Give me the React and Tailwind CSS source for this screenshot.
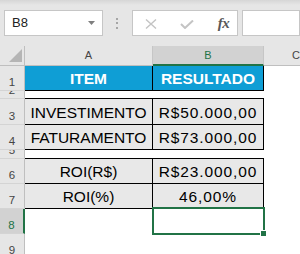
import React from 'react';

const GREEN = '#217346';

// row list: height in px (incl. bottom border), contents and style kind
const rows = [
  { n: 1, h: 'h-[25px]', a: 'ITEM', b: 'RESULTADO', kind: 'head' },
  { n: 2, h: 'h-[8px]', kind: 'blank' },
  { n: 3, h: 'h-[26px]', a: 'INVESTIMENTO', b: 'R$50.000,00', kind: 'data' },
  { n: 4, h: 'h-[25px]', a: 'FATURAMENTO', b: 'R$73.000,00', kind: 'data' },
  { n: 5, h: 'h-[9px]', kind: 'blank' },
  { n: 6, h: 'h-[25px]', a: 'ROI(R$)', b: 'R$23.000,00', kind: 'data' },
  { n: 7, h: 'h-[25px]', a: 'ROI(%)', b: '46,00%', kind: 'data' },
  { n: 8, h: 'h-[25px]', kind: 'empty', selected: true },
  { n: 9, h: 'h-[25px]', kind: 'empty' },
];

const RowHeader = ({ n, selected }) => (
  <div
    className={`w-[25px] shrink-0 flex items-end justify-center overflow-hidden pb-[1px] text-[11.5px] leading-[14px] ${
      selected
        ? 'bg-[#d2d2d2] text-[#217346] border-r-2 border-r-[#217346] border-b border-b-[#d4d4d4]'
        : 'bg-[#e6e6e6] text-[#444] border-r border-r-[#bfbfbf] border-b border-b-[#d4d4d4]'
    }`}
  >
    {n}
  </div>
);

const Cell = ({ row, value, width, numeric }) => {
  const { kind } = row;
  let cls = '';
  if (kind === 'head') cls = 'bg-[#0f9ed5] text-white font-bold border-b border-r border-black';
  else if (kind === 'data') cls = 'bg-[#e8e8e8] text-black border-b border-r border-black';
  else if (kind === 'blank') cls = 'bg-white border-b border-black';
  else cls = 'bg-white';
  return (
    <div
      className={`${width} shrink-0 flex items-end justify-center overflow-hidden pb-[2px] text-[15.5px] leading-[18px] whitespace-nowrap ${cls} ${
        numeric ? 'tracking-[0.9px]' : ''
      }`}
    >
      {value}
    </div>
  );
};

export default function App() {
  return (
    <div
      className="relative w-[300px] h-[254px] overflow-hidden bg-white"
      style={{ fontFamily: '"Liberation Sans", Arial, sans-serif' }}
    >
      {/* formula bar */}
      <div className="h-[46px] bg-[#e6e6e6] relative">
        <div className="absolute inset-x-0 top-0 h-[5px] bg-gradient-to-b from-[#d6d6d6] to-[#e6e6e6]" />
        <div className="relative flex items-start pt-[10px] pl-[4px] gap-0">
          <div className="w-[102px] h-[26px] bg-white border border-[#c6c6c6] flex items-center justify-between pl-[7px] pr-[7px]">
            <span className="text-[13px] text-[#222]">B8</span>
            <svg width="7" height="4" viewBox="0 0 7 4">
              <path d="M0 0 H7 L3.5 4 Z" fill="#7f7f7f" />
            </svg>
          </div>
          <div className="w-[30px] h-[26px] flex flex-col items-center justify-center gap-[2.5px]">
            <div className="w-[2px] h-[2px] bg-[#a6a6a6]" />
            <div className="w-[2px] h-[2px] bg-[#a6a6a6]" />
            <div className="w-[2px] h-[2px] bg-[#a6a6a6]" />
          </div>
          <div className="w-[110px] h-[26px] bg-white border border-[#c6c6c6] flex items-center pl-[12px]">
            <svg width="12" height="10" viewBox="0 0 12 10" className="mt-[2px]">
              <path d="M1 0.5 L11 9.5 M11 0.5 L1 9.5" stroke="#c4c4c4" strokeWidth="1.4" />
            </svg>
            <svg width="14" height="9" viewBox="0 0 14 9" className="ml-[23px] mt-[3px]">
              <path d="M1 4 L5 8 L13 0.5" stroke="#c4c4c4" strokeWidth="2" fill="none" />
            </svg>
            <span
              className="ml-[24px] italic text-[15px] text-[#595959] font-bold tracking-[-0.5px]"
              style={{ fontFamily: '"Liberation Serif", serif' }}
            >
              fx
            </span>
          </div>
          <div className="ml-[4px] w-[60px] h-[26px] bg-white border border-[#c6c6c6]" />
        </div>
      </div>

      {/* column headers */}
      <div className="flex h-[20px] text-[11px]">
        <div className="w-[25px] shrink-0 bg-[#e6e6e6] border-r border-r-[#bfbfbf] border-b border-b-[#bfbfbf] relative">
          <svg width="13" height="13" viewBox="0 0 13 13" className="absolute left-[9px] top-[3px]">
            <path d="M0 13 L13 13 L13 0 Z" fill="#b5b5b5" />
          </svg>
        </div>
        <div className="w-[128px] shrink-0 bg-[#e6e6e6] text-[#444] border-r border-r-[#c6c6c6] border-b border-b-[#bfbfbf] flex items-center justify-center">
          A
        </div>
        <div className="w-[111px] shrink-0 bg-[#d2d2d2] text-[#217346] border-r border-r-[#c6c6c6] border-b-2 border-b-[#217346] flex items-center justify-center">
          B
        </div>
        <div className="w-[64px] shrink-0 bg-[#e6e6e6] text-[#444] border-b border-b-[#bfbfbf] flex items-center justify-center">
          C
        </div>
      </div>

      {/* grid rows */}
      {rows.map((row) => (
        <div key={row.n} className={`flex ${row.h}`}>
          <RowHeader n={row.n} selected={row.selected} />
          <Cell row={row} value={row.a} width="w-[128px]" />
          <Cell row={row} value={row.b} width="w-[111px]" numeric={row.kind === 'data'} />
          <div className="w-[64px] shrink-0 bg-white" />
        </div>
      ))}

      {/* active cell B8 */}
      <div className="absolute left-[152px] top-[207px] w-[113px] h-[28px] border-2 border-[#217346]" />
      <div className="absolute left-[260px] top-[230px] w-[7px] h-[7px] bg-[#217346] border border-white" />
    </div>
  );
}
